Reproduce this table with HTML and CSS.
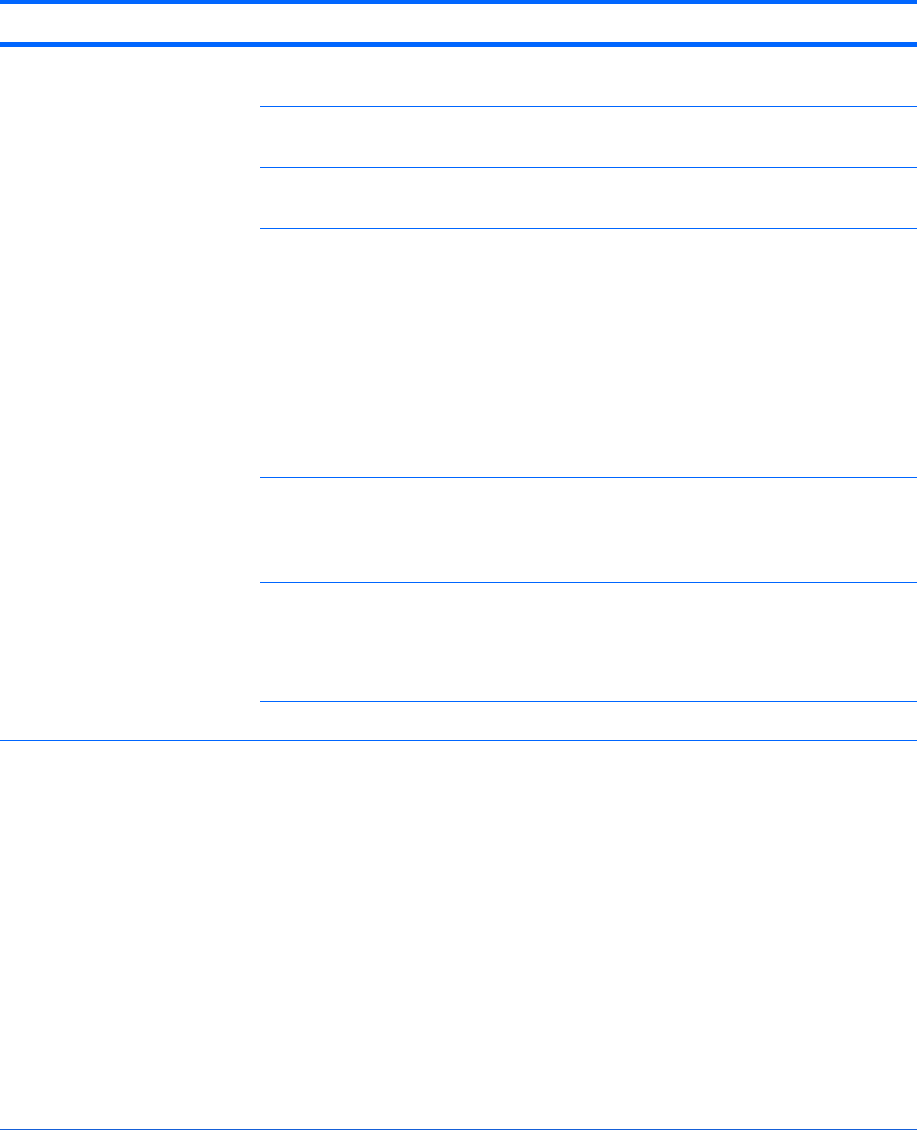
FILE: index.html
```html
<!DOCTYPE html>
<html lang="en">
<head>
    <meta charset="UTF-8">
    <meta name="viewport" content="width=device-width, initial-scale=1.0">
    <title>Table</title>
    <link rel="stylesheet" href="styles.css">
</head>
<body>

    <div class="spec-table">
        <!-- Header -->
        <div class="spec-head"></div>

        <!-- First group -->
        <div class="spec-group">
            <div class="spec-label"></div>
            <div class="spec-rows">
                <div class="spec-row row-a"></div>
                <div class="spec-row row-b"></div>
                <div class="spec-row row-b"></div>
                <div class="spec-row row-c"></div>
                <div class="spec-row row-d"></div>
                <div class="spec-row row-e"></div>
                <div class="spec-row row-last"></div>
            </div>
        </div>

        <!-- Second group -->
        <div class="spec-group group-tall">
            <div class="spec-label"></div>
            <div class="spec-rows"></div>
        </div>
    </div>

</body>
</html>
```

FILE: styles.css
```css
/* General Reset */
* {
    margin: 0;
    padding: 0;
    box-sizing: border-box;
    font-family: "Liberation Sans", Arial, sans-serif;
}

body {
    background: #ffffff;
    color: #000000;
}

/* Table */
.spec-table {
    width: 917px;
    border-top: 4px solid #0066ff;
}

.spec-head {
    height: 43px;
    border-bottom: 5px solid #0066ff;
}

.spec-group {
    display: flex;
    border-bottom: 1px solid #0066ff;
}

.spec-label {
    width: 260px;
    flex-shrink: 0;
}

.spec-rows {
    flex: 1;
    display: flex;
    flex-direction: column;
}

.spec-row {
    border-bottom: 1px solid #0066ff;
}

.row-a {
    height: 60px;
}

.row-b {
    height: 61px;
}

.row-c {
    height: 249px;
}

.row-d {
    height: 105px;
}

.row-e {
    height: 119px;
}

.row-last {
    height: 38px;
    border-bottom: none;
}

.group-tall {
    height: 389px;
    border-bottom-color: #1560d8;
}
```
